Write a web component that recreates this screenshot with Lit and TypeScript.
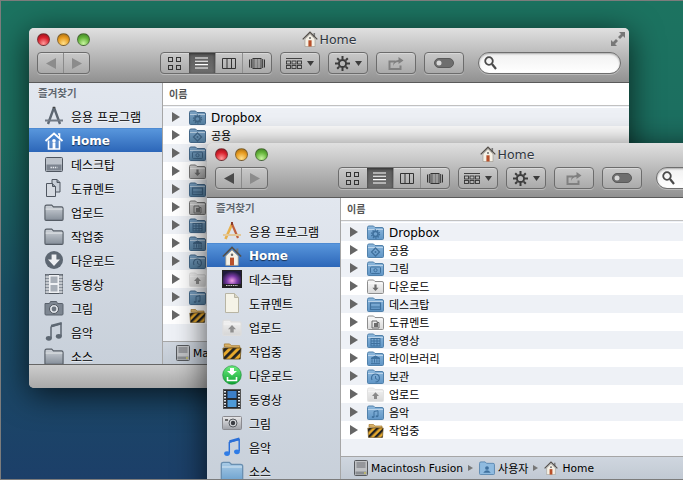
import { LitElement, html, svg, css } from "lit";
import { customElement, property } from "lit/decorators.js";

let uid = 0;

const folder = (top: string, bottom: string, stroke: string, glyph: unknown = null, w = 17, h = 15) => {
  const id = `f${uid++}`;
  return html`<svg width=${w} height=${h} viewBox="0 0 17 15">
    <defs><linearGradient id=${id} x1="0" y1="0" x2="0" y2="1"><stop offset="0" stop-color=${top}></stop><stop offset="1" stop-color=${bottom}></stop></linearGradient></defs>
    <path d="M.5 2.5Q.5 1 2 1h4.5L8 2.5h7q1.5 0 1.5 1.500v9.500q0 1-1 1h-14q-1 0-1-1z" fill="url(#${id})" stroke=${stroke}></path>
    <path d="M1 4.5h15" stroke="#fff" stroke-opacity=".45"></path>
    ${glyph}
  </svg>`;
};

const g = {
  gear: (c: string) => svg`<circle cx="8.5" cy="9" r="2.6" fill="none" stroke=${c} stroke-width="1.6"></circle><circle cx="8.5" cy="9" r="4" fill="none" stroke=${c} stroke-width="1.3" stroke-dasharray="1.4 1.1"></circle>`,
  diamond: (c: string) => svg`<path d="M8.5 5l4 4-4 4-4-4z" fill="none" stroke=${c} stroke-width="1.3"></path><circle cx="8.5" cy="9" r="1" fill=${c}></circle>`,
  photo: (c: string) => svg`<rect x="3.5" y="6" width="10" height="6.5" rx="1" fill="none" stroke=${c}></rect><circle cx="8.5" cy="9.2" r="1.6" fill="none" stroke=${c}></circle>`,
  down: (c: string) => svg`<path d="M7.4 5.5h2.2v3.2h2L8.5 12 5.4 8.7h2z" fill=${c}></path>`,
  desk: (c: string) => svg`<rect x="3.5" y="6" width="10" height="6.5" fill="none" stroke=${c} stroke-width="1.2"></rect><path d="M4 10h9" stroke=${c}></path>`,
  doc: (c: string) => svg`<path d="M5 6h5v1.5h2V13H5z" fill="none" stroke=${c}></path><rect x="7" y="8" width="4" height="4" fill=${c}></rect>`,
  film: (c: string) => svg`<rect x="4" y="5.5" width="9" height="7.5" fill="none" stroke=${c}></rect><path d="M7 5.5v7.5M10 5.5v7.5M4 8h9M4 10.5h9" stroke=${c}></path>`,
  lib: (c: string) => svg`<path d="M8.5 5l4.5 2.4H4zM5 8.2v3.4M7.5 8.2v3.4M9.9 8.2v3.4M12.2 8.2v3.4M4 12.6h9" fill=${c} stroke=${c}></path>`,
  arch: (c: string) => svg`<path d="M5 11a4 4 0 1 1 3.5 2" fill="none" stroke=${c} stroke-width="1.2"></path><path d="M8.5 7v2.5l2 1" fill="none" stroke=${c}></path>`,
  up: (c: string) => svg`<path d="M8.5 5.2L12 9h-2v3H7V9H5z" fill=${c}></path>`,
  note: (c: string) => svg`<path d="M7 6.5l4-.8v5.500M7 6.500v5.500" fill="none" stroke=${c}></path><ellipse cx="6" cy="12" rx="1.3" ry="1" fill=${c}></ellipse><ellipse cx="10" cy="11.3" rx="1.3" ry="1" fill=${c}></ellipse>`,
};

const stripes = (w = 17, h = 15) => {
  const id = `s${uid++}`;
  return html`<svg width=${w} height=${h} viewBox="0 0 17 15">
    <defs><pattern id=${id} width="5" height="5" patternUnits="userSpaceOnUse" patternTransform="rotate(45)"><rect width="5" height="5" fill="#e7a92c"></rect><rect width="2.4" height="5" fill="#222"></rect></pattern></defs>
    <path d="M2 4V1.500h4.500L8 3h7v2z" fill="#d9b268" stroke="#a87b30" stroke-width=".7"></path>
    <path d="M.8 5h15.400l-.7 9.400H1.500z" fill="url(#${id})" stroke="#5a4210" stroke-width=".6"></path>
  </svg>`;
};

const houseColor = (s = 16) => html`<svg width=${s} height=${s} viewBox="0 0 16 16">
  <path d="M11.500 2h1.600v4h-1.600z" fill="#777"></path>
  <path d="M3 8v7.500h10V8L8 3.200z" fill="#f5f1e6" stroke="#9a958a" stroke-width=".6"></path>
  <path d="M.7 8.400L8 1.200l7.300 7.200" fill="none" stroke="#55504a" stroke-width="1.300"></path>
  <rect x="6.400" y="9.300" width="3.200" height="6.200" fill="#b8502a"></rect>
  <circle cx="8" cy="7" r="1" fill="#6a6a6a"></circle>
</svg>`;

const houseWhite = html`<svg width="20" height="20" viewBox="0 0 20 20">
  <path d="M4.500 9.500V18h11V9.500" fill="#fff" fill-opacity=".15" stroke="#fff" stroke-width="1.600"></path>
  <path d="M1.500 10L10 2.500l8.500 7.500" fill="none" stroke="#fff" stroke-width="1.800"></path>
  <path d="M14 3h1.600v4" fill="none" stroke="#fff" stroke-width="1.400"></path>
  <circle cx="10" cy="9.800" r="1.800" fill="#fff"></circle><rect x="8.600" y="11.500" width="2.800" height="6.500" fill="#fff"></rect>
</svg>`;

const sideBack = [
  html`<svg width="20" height="20" viewBox="0 0 20 20"><path d="M10 1.500L4 18M10 1.500L16 18" stroke="#5d6772" stroke-width="2.400" fill="none"></path><path d="M1 14.500h18" stroke="#727b86" stroke-width="1.800"></path><path d="M8.800 1.500h2.400" stroke="#444" stroke-width="1.500"></path></svg>`,
  houseWhite,
  html`<svg width="20" height="20" viewBox="0 0 20 20"><rect x="1.500" y="3.500" width="17" height="14" rx="1" fill="#bcc2ca" stroke="#4f5660"></rect><rect x="2.500" y="10.500" width="15" height="6" fill="#7c848f"></rect><path d="M6.500 13.500h7" stroke="#e6e9ee" stroke-width="1.600" stroke-dasharray="1.400 .8"></path></svg>`,
  html`<svg width="20" height="20" viewBox="0 0 20 20"><path d="M8 1.500h5l3 3V14H8z" fill="#c7ced7" stroke="#4f5660"></path><path d="M2.500 5.500h6l3 3v10h-9z" fill="#d5dae1" stroke="#4f5660"></path><path d="M8.500 5.500v3h3M13 1.500v3h3" fill="#8d96a1" stroke="#4f5660"></path></svg>`,
  folder("#cfd4da", "#848d98", "#555c65", null, 20, 17),
  folder("#cfd4da", "#848d98", "#555c65", null, 20, 17),
  html`<svg width="20" height="20" viewBox="0 0 20 20"><circle cx="10" cy="10" r="9" fill="#5d6772"></circle><path d="M7.600 4.500h4.800v5H16L10 16 4 9.500h3.600z" fill="#eef0f3"></path></svg>`,
  html`<svg width="18" height="20" viewBox="0 0 18 20"><rect x=".5" y=".5" width="17" height="19" fill="#eef0f3" stroke="#50575f"></rect><rect x=".5" y=".5" width="3.500" height="19" fill="#8a929c"></rect><rect x="14" y=".5" width="3.500" height="19" fill="#8a929c"></rect><path d="M.5 3h3.500M.5 6h3.500M.5 9h3.500M.5 12h3.500M.5 15h3.500M.5 18h3.500M14 3h3.500M14 6h3.500M14 9h3.500M14 12h3.500M14 15h3.500M14 18h3.500" stroke="#fff"></path><rect x="5.500" y="2.500" width="7" height="6.500" fill="#a7aeb7"></rect><rect x="5.500" y="11" width="7" height="6.500" fill="#a7aeb7"></rect></svg>`,
  html`<svg width="20" height="18" viewBox="0 0 20 18"><path d="M1 4.500h4.500l1-2h6l1 2H18q1 0 1 1V15q0 1-1 1H2q-1 0-1-1z" fill="#7d8691" stroke="#5a626c"></path><circle cx="10" cy="10" r="4.500" fill="#dfe3e8" stroke="#4d545d"></circle><circle cx="10" cy="10" r="2.400" fill="#6c757f"></circle></svg>`,
  html`<svg width="20" height="20" viewBox="0 0 20 20"><path d="M7 4.500L17 1.500v12.500M7 4.500V16" fill="none" stroke="#5d6772" stroke-width="1.500"></path><path d="M7 2.800L17.500 0v2.600L7 5.500z" fill="#5d6772"></path><ellipse cx="4.800" cy="16.300" rx="3" ry="2.400" fill="#5d6772"></ellipse><ellipse cx="14.800" cy="14.300" rx="3" ry="2.400" fill="#5d6772"></ellipse></svg>`,
  folder("#cfd4da", "#848d98", "#555c65", null, 20, 17),
];

const sideFront = [
  html`<svg width="20" height="20" viewBox="0 0 20 20"><path d="M10 3L3.500 18" stroke="#e8b04c" stroke-width="2.600"></path><path d="M10 3l6 14" stroke="#c0613d" stroke-width="2.200"></path><path d="M1 14h18" stroke="#e3c89a" stroke-width="1.800"></path><path d="M10 1v3" stroke="#8a3c2a" stroke-width="2"></path></svg>`,
  houseColor(20),
  html`<svg width="20" height="18" viewBox="0 0 20 18"><defs><radialGradient id="dk" cx=".5" cy=".6" r=".55"><stop offset="0" stop-color="#f2a2e6"></stop><stop offset=".5" stop-color="#7a3aa5"></stop><stop offset="1" stop-color="#1f1a3c"></stop></radialGradient></defs><rect x=".5" y=".5" width="19" height="17" fill="url(#dk)" stroke="#222"></rect><rect x="1" y="14" width="18" height="3" fill="#222"></rect><path d="M4 15.500h12" stroke="#ccc" stroke-dasharray="1.500 .8"></path></svg>`,
  html`<svg width="18" height="20" viewBox="0 0 18 20"><path d="M2.500.5h9l4 4v15h-13z" fill="#f5f3e7" stroke="#b8b5a4"></path><path d="M11.500.5v4h4" fill="#d9d6c4" stroke="#b8b5a4"></path></svg>`,
  folder("#f2f2f2", "#d5d5d5", "#dddddd", g.up("#8f8f8f"), 20, 17),
  stripes(20, 18),
  html`<svg width="20" height="20" viewBox="0 0 20 20"><defs><linearGradient id="gr" x1="0" y1="0" x2="0" y2="1"><stop offset="0" stop-color="#6cec7e"></stop><stop offset="1" stop-color="#0ea233"></stop></linearGradient></defs><circle cx="10" cy="10" r="9.300" fill="url(#gr)" stroke="#1a8a34" stroke-width=".6"></circle><path d="M8 3h4v3h3l-5 4.500L5 6h3z" fill="#fff"></path><path d="M5.500 12v3.500h9V12" fill="none" stroke="#fff" stroke-width="1.600"></path></svg>`,
  html`<svg width="18" height="20" viewBox="0 0 18 20"><rect x=".5" y=".5" width="17" height="19" fill="#26292e" stroke="#555"></rect><path d="M2 2v16M16 2v16" stroke="#dfe3e8" stroke-width="2" stroke-dasharray="1.600 1.400"></path><rect x="4.500" y="2" width="9" height="7" fill="#3d7fc8"></rect><rect x="4.500" y="11" width="9" height="7" fill="#4e9ad8"></rect></svg>`,
  html`<svg width="20" height="14" viewBox="0 0 20 14"><defs><linearGradient id="cm" x1="0" y1="0" x2="0" y2="1"><stop offset="0" stop-color="#e8e8ea"></stop><stop offset="1" stop-color="#9ea0a6"></stop></linearGradient></defs><rect x=".5" y=".5" width="19" height="13" rx="1" fill="url(#cm)" stroke="#8a8a8f"></rect><circle cx="11" cy="7" r="4" fill="#d3d5d9" stroke="#55585d"></circle><circle cx="11" cy="7" r="2.200" fill="#3a3c42"></circle><rect x="3" y="3" width="3" height="2" fill="#666"></rect></svg>`,
  html`<svg width="18" height="21" viewBox="0 0 20 22"><path d="M7 5L18 2v13M7 5v12" fill="none" stroke="#2a6fd8" stroke-width="1.600"></path><path d="M7 3L18 0v3L7 6z" fill="#2a6fd8"></path><ellipse cx="4.500" cy="17.800" rx="3.200" ry="2.600" fill="#2f7ce6"></ellipse><ellipse cx="15.500" cy="15.800" rx="3.200" ry="2.600" fill="#2f7ce6"></ellipse></svg>`,
  folder("#a9cbe6", "#6fa3cf", "#6a8fb0", null, 24, 20),
];

const sideNames = ["응용 프로그램", "Home", "데스크탑", "도큐멘트", "업로드", "작업중", "다운로드", "동영상", "그림", "음악", "소스"];

const listFor = (back: boolean) => {
  const t = back ? "#7ca2c4" : "#8fb9dd";
  const b = back ? "#557f9f" : "#5f95c6";
  const s = back ? "#45698a" : "#5181ab";
  const c = back ? "#3f6383" : "#3f709d";
  const gt = back ? "#d2d2d2" : "#fafafa";
  const gb = back ? "#a8a8a8" : "#d8d8d8";
  const gs = back ? "#777" : "#8e8e8e";
  const blue = (gl: unknown) => folder(t, b, s, gl);
  const gray = (gl: unknown) => folder(gt, gb, gs, gl);
  return [
    ["Dropbox", blue(g.gear(c))],
    ["공용", blue(g.diamond(c))],
    ["그림", blue(g.photo(c))],
    ["다운로드", gray(g.down("#6c6c6c"))],
    ["데스크탑", blue(g.desk(c))],
    ["도큐멘트", gray(g.doc("#6c6c6c"))],
    ["동영상", blue(g.film(c))],
    ["라이브러리", blue(g.lib(c))],
    ["보관", blue(g.arch(c))],
    ["업로드", folder("#f3f3f3", "#d8d8d8", "#e2e2e2", g.up("#8a8a8a"))],
    ["음악", blue(g.note(c))],
    ["작업중", stripes()],
  ] as [string, unknown][];
};

const tri = html`<svg width="7" height="5" viewBox="0 0 7 5"><path d="M0 0h7L3.500 5z" fill="#3c3c3c"></path></svg>`;

const views = [
  html`<svg width="13" height="13" viewBox="0 0 13 13"><g fill="none" stroke="#333"><rect x=".5" y=".5" width="4" height="4"></rect><rect x="8.500" y=".5" width="4" height="4"></rect><rect x=".5" y="8.500" width="4" height="4"></rect><rect x="8.500" y="8.500" width="4" height="4"></rect></g></svg>`,
  html`<svg width="13" height="12" viewBox="0 0 13 12"><path d="M0 1h13M0 4.300h13M0 7.600h13M0 11h13" stroke="#fff" stroke-width="1.100"></path></svg>`,
  html`<svg width="14" height="11" viewBox="0 0 14 11"><path d="M.5.5h13v10H.5zM5 .5v10M9.500.5v10" fill="none" stroke="#333"></path></svg>`,
  html`<svg width="16" height="11" viewBox="0 0 16 11"><rect x="4" y=".5" width="8" height="10" fill="none" stroke="#333"></rect><path d="M.5 1.500v8M2.300 1v9M13.700 1v9M15.500 1.500v8" stroke="#333"></path><path d="M5.500 1v9M7 1v9M8.500 1v9M10 1v9" stroke="#555" stroke-width=".6"></path></svg>`,
];

@customElement("finder-window")
class FinderWindow extends LitElement {
  @property() variant = "front";

  static styles = css`
    :host { display: flex; flex-direction: column; width: 600px; height: 360px; border-radius: 5px; overflow: hidden; box-shadow: 0 6px 32px rgba(0,0,0,.72); font-family: "DejaVu Sans", "Noto Sans CJK KR", sans-serif; font-size: 12px; color: #000; background: #b5b5b5; }
    .head { flex: none; height: 54px; box-sizing: content-box; border-bottom: 1px solid #5a5a5a; background: linear-gradient(#e0e0e0, #919191); display: flex; flex-direction: column; position: relative; }
    .titlerow { height: 24px; display: flex; align-items: flex-start; justify-content: center; position: relative; }
    .lights { position: absolute; left: 8px; top: 5px; display: flex; gap: 7px; }
    .light { width: 13px; height: 13px; border-radius: 50%; box-sizing: border-box; border: 1px solid rgba(60,60,60,.55); }
    .red { background: radial-gradient(circle at 50% 85%, #ff9a9a, #d8202c 55%, #8e1018); }
    .amber { background: radial-gradient(circle at 50% 85%, #ffe08a, #e69a1e 55%, #9a6410); }
    .green { background: radial-gradient(circle at 50% 85%, #c8f5a0, #64b43a 55%, #3a7a20); }
    .title { display: flex; align-items: center; gap: 2px; height: 22px; font-size: 12.500px; color: #2f3640; text-shadow: 0 1px 0 rgba(255,255,255,.5); }
    .expand { position: absolute; top: 4px; right: 4px; }
    .tools { display: flex; padding-left: 8px; height: 22px; }
    .seg { box-sizing: border-box; height: 22px; border: 1px solid #6c6c6c; border-radius: 4px; background: linear-gradient(#c9c9c9, #aaaaaa); box-shadow: 0 1px 0 rgba(255,255,255,.3), inset 0 1px 0 rgba(255,255,255,.3); display: flex; align-items: center; overflow: hidden; }
    .nav { width: 53px; }
    .nav > div { flex: 1; height: 100%; display: flex; align-items: center; justify-content: center; }
    .nav > div + div { border-left: 1px solid #8a8a8a; }
    .view { width: 112px; margin-left: 70px; }
    .view > div { height: 100%; display: flex; align-items: center; justify-content: center; }
    .view > div + div { border-left: 1px solid #8f8f8f; }
    .view > .on { background: linear-gradient(#5c5c5c, #6e6e6e); box-shadow: inset 0 1px 3px rgba(0,0,0,.5); border-left: none; }
    .v0 { width: 29px; } .v1 { width: 27px; } .v2 { width: 27px; } .v3 { width: 29px; }
    .btn { width: 40px; margin-left: 8px; justify-content: center; gap: 5px; }
    .search { box-sizing: border-box; width: 143px; height: 22px; margin-left: 14px; border: 1px solid #6e6e6e; border-radius: 11px; background: linear-gradient(#f1f1f1, #fff); box-shadow: inset 0 1px 2px rgba(0,0,0,.3), 0 1px 0 rgba(255,255,255,.3); display: flex; align-items: center; padding-left: 5px; }
    .body { flex: none; height: 281px; display: flex; }
    .side { box-sizing: border-box; width: 134px; flex: none; border-right: 1px solid #a6a6a6; background: linear-gradient(#e2e7ef, #c8d0da); overflow: hidden; }
    .heading { height: 21px; line-height: 21px; padding-left: 9px; font-size: 10.500px; font-weight: 700; color: #5f6770; text-shadow: 0 1px 0 rgba(255,255,255,.6); }
    .item { height: 24px; display: flex; align-items: center; text-shadow: 0 1px 0 rgba(255,255,255,.6); }
    .item .ic { width: 42px; padding-left: 7px; box-sizing: border-box; flex: none; display: flex; align-items: center; justify-content: center; height: 24px; }
    .item.sel { background: linear-gradient(#5896dc, #2c66b8); border-top: 1px solid #4d8ad2; box-sizing: border-box; color: #fff; font-weight: 700; text-shadow: 0 1px 1px rgba(0,0,0,.6); }
    .main { flex: 1; min-width: 0; display: flex; flex-direction: column; background: #fff; }
    .colhead { flex: none; box-sizing: border-box; height: 23px; line-height: 23px; border-bottom: 1px solid #c1c1c1; padding-left: 6px; font-size: 10px; font-weight: 700; color: #555; }
    .list { flex: 1; min-height: 0; overflow: hidden; padding-top: 2px; background: repeating-linear-gradient(#eef1f6 0 18px, #fff 18px 36px) 0 2px; }
    .row { height: 18px; display: flex; align-items: center; }
    .row .arrow { margin-left: 9px; width: 0; height: 0; border-style: solid; border-width: 5px 0 5px 8px; border-color: transparent transparent transparent #666; }
    .row .fi { margin-left: 9px; width: 17px; height: 15px; display: flex; }
    .row .name { margin-left: 5px; white-space: nowrap; font-size: 11px; }
    .row .name.latin { font-size: 12px; padding-top: 2px; }
    .path { flex: none; box-sizing: border-box; height: 23px; border-top: 1px solid #a6a6a6; background: linear-gradient(#cfd6df, #c1c9d3); display: flex; align-items: center; padding-left: 13px; font-size: 10.700px; white-space: nowrap; overflow: hidden; }
    .path .t { margin-left: 3px; }
    .path .ko { font-size: 11px; }
    .path .last { margin-left: 4px; }
    .path .sep { margin: 0 6px 0 5px; width: 0; height: 0; border-style: solid; border-width: 3.500px 0 3.500px 5px; border-color: transparent transparent transparent #777; }
    .foot { flex: 1; border-top: 1px solid #666; background: linear-gradient(#cdcdcd, #a9a9a9); }
  `;

  render() {
    const back = this.variant === "back";
    const icons = back ? sideBack : sideFront;
    const arrowL = back ? "#8c8c8c" : "#4a4a4a";
    const dim = "#808080";
    return html`
      <div class="head">
        <div class="titlerow">
          <div class="lights"><div class="light red"></div><div class="light amber"></div><div class="light green"></div></div>
          <div class="title">${houseColor(16)}<span>Home</span></div>
          <svg class="expand" width="14" height="14" viewBox="0 0 14 14"><path d="M8 0h6v6l-2-2-3 3-2-2 3-3zM6 14H0V8l2 2 3-3 2 2-3 3z" fill="#777"></path></svg>
        </div>
        <div class="tools">
          <div class="seg nav">
            <div><svg width="10" height="11" viewBox="0 0 10 11"><path d="M10 0v11L0 5.500z" fill=${arrowL}></path></svg></div>
            <div><svg width="10" height="11" viewBox="0 0 10 11"><path d="M0 0v11l10-5.500z" fill="#8c8c8c"></path></svg></div>
          </div>
          <div class="seg view">
            ${views.map((v, i) => html`<div class="v${i} ${i === 1 ? "on" : ""}">${v}</div>`)}
          </div>
          <div class="seg btn">
            <svg width="16" height="11" viewBox="0 0 16 11"><g fill="none" stroke="#333" stroke-width=".9"><path d="M0 .5h16"></path><rect x=".5" y="3" width="4" height="3"></rect><rect x="6" y="3" width="4" height="3"></rect><rect x="11.500" y="3" width="4" height="3"></rect><rect x=".5" y="7.500" width="4" height="3"></rect><rect x="6" y="7.500" width="4" height="3"></rect><rect x="11.500" y="7.500" width="4" height="3"></rect></g></svg>
            ${tri}
          </div>
          <div class="seg btn">
            <svg width="15" height="15" viewBox="0 0 15 15"><circle cx="7.500" cy="7.500" r="3.600" fill="none" stroke="#3c3c3c" stroke-width="2"></circle><path d="M7.500 0v3M7.500 12v3M0 7.500h3M12 7.500h3M2.200 2.200l2 2M10.800 10.800l2 2M12.800 2.200l-2 2M4.200 10.800l-2 2" stroke="#3c3c3c" stroke-width="2"></path></svg>
            ${tri}
          </div>
          <div class="seg btn">
            <svg width="16" height="13" viewBox="0 0 16 13"><path d="M.5 3.500h7v2h-5v5.500h9V8.500h2V13H.5z" fill=${dim}></path><path d="M10.500 0l5 3.500-5 3.500V5Q6.500 5 5 9q0-6 5.500-6z" fill=${dim}></path></svg>
          </div>
          <div class="seg btn">
            <svg width="20" height="10" viewBox="0 0 20 10"><rect x=".5" y=".5" width="19" height="9" rx="4.500" fill="#6e6e6e" stroke="#5a5a5a"></rect><circle cx="5" cy="5" r="2.500" fill="#d8d8d8"></circle></svg>
          </div>
          <div class="search">
            <svg width="13" height="14" viewBox="0 0 13 14"><circle cx="5" cy="5" r="3.800" fill="none" stroke="#4a4a4a" stroke-width="1.800"></circle><path d="M8 8l4 5" stroke="#4a4a4a" stroke-width="2.200"></path></svg>
          </div>
        </div>
      </div>
      <div class="body">
        <div class="side">
          <div class="heading">즐겨찾기</div>
          ${sideNames.map((n, i) => html`<div class="item ${i === 1 ? "sel" : ""}"><div class="ic">${icons[i]}</div><span>${n}</span></div>`)}
        </div>
        <div class="main">
          <div class="colhead">이름</div>
          <div class="list">
            ${listFor(back).map(([n, ic], i) => html`<div class="row"><div class="arrow"></div><div class="fi">${ic}</div>${back && i > 1 ? null : html`<span class="name ${n === "Dropbox" ? "latin" : ""}">${n}</span>`}</div>`)}
          </div>
          <div class="path">
            <svg width="14" height="16" viewBox="0 0 14 16"><rect x=".5" y=".5" width="13" height="15" rx="1" fill="#bfc1c4" stroke="#55585c"></rect><path d="M2.500 3h9M2.500 5h9M2.500 7h9" stroke="#6a6d72"></path><rect x="1.500" y="11.500" width="11" height="3" fill="#8a8d91"></rect><rect x="10" y="12.500" width="2" height="1" fill="#e8e04a"></rect></svg>
            ${back
              ? html`<span class="t">Ma</span>`
              : html`<span class="t">Macintosh Fusion</span>
                <div class="sep"></div>
                <svg width="16" height="14" viewBox="0 0 17 15"><path d="M.5 2.500Q.5 1 2 1h4.500L8 2.500h7q1.500 0 1.500 1.500v9.500q0 1-1 1h-14q-1 0-1-1z" fill="#8fbbe0" stroke="#5a88b0"></path><circle cx="8.500" cy="7.500" r="2" fill="#3f709d"></circle><path d="M4.500 12.500q4-5 8 0z" fill="#3f709d"></path></svg>
                <span class="t ko">사용자</span>
                <div class="sep"></div>
                ${houseColor(14)}
                <span class="t last">Home</span>`}
          </div>
        </div>
      </div>
      <div class="foot"></div>
    `;
  }
}

@customElement("app-root")
class AppRoot extends LitElement {
  static styles = css`
    :host { display: block; width: 683px; height: 480px; }
    .desk { position: relative; box-sizing: border-box; width: 683px; height: 480px; overflow: hidden; border: 1px solid #7c7c7c; border-right: none; background: linear-gradient(#1c7360 0, #1c6e60 28%, #1a4f64 60%, #1c3f69 100%); }
    .back { position: absolute; left: 28px; top: 27px; }
    .front { position: absolute; left: 206px; top: 142px; }
  `;
  render() {
    return html`<div class="desk">
      <finder-window class="back" variant="back"></finder-window>
      <finder-window class="front" variant="front"></finder-window>
    </div>`;
  }
}
void FinderWindow; void AppRoot;
